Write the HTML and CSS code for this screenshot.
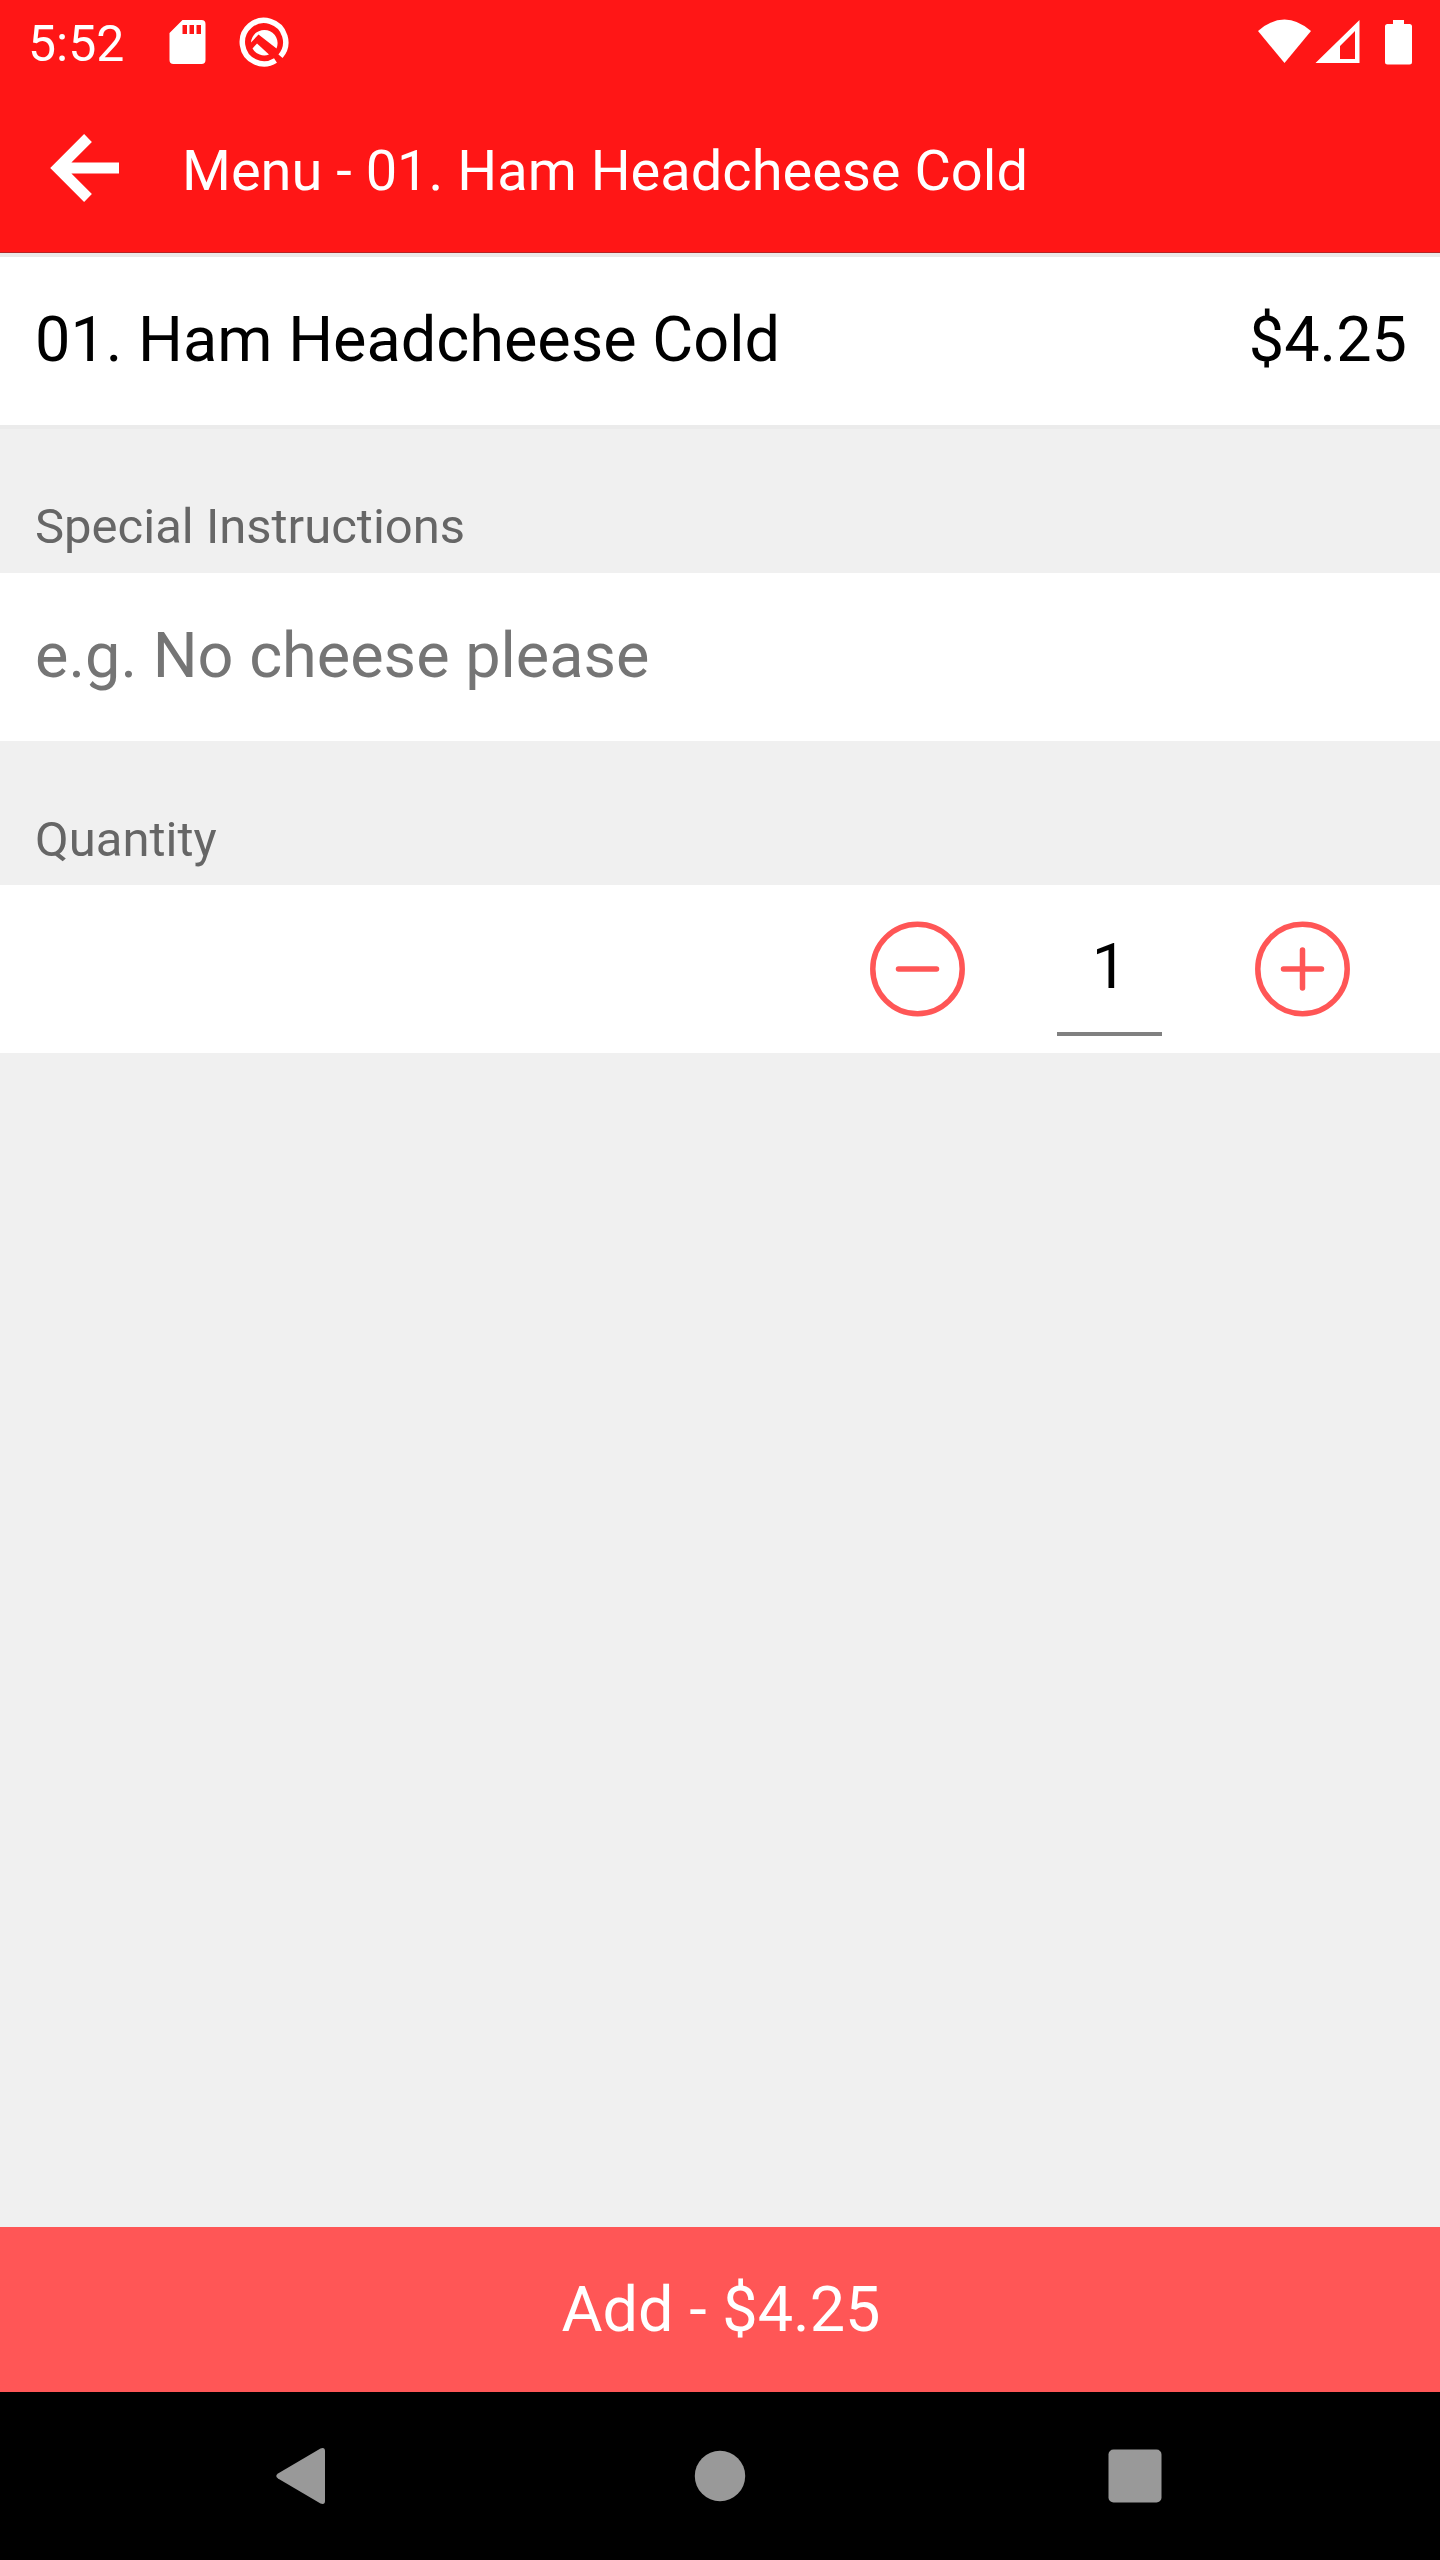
FILE: index.html
```html
<!DOCTYPE html>
<html lang="en">
<head>
  <meta charset="UTF-8" />
  <title>Menu - 01. Ham Headcheese Cold</title>
  <link rel="stylesheet" href="styles.css">
</head>

<body>
  <!-- Status Bar -->
  <div class="status-bar">
    <span class="clock">5:52</span>
    <svg class="status-left" width="120" height="50" viewBox="169 17 120 50">
      <path fill="#fff" fill-rule="evenodd" d="M182.500 20H201.500Q205.500 20 205.500 24V60Q205.500 64 201.500 64H173.500Q169.500 64 169.500 60V33ZM182.500 25V34H187V25ZM189.500 25V34H194V25ZM196.500 25V34H201V25Z"/>
      <path fill="none" stroke="#fff" stroke-width="5.500" d="M275.500 60.500A21.700 21.700 0 1 1 280.500 56.200"/>
      <path fill="#fff" d="M251 42.500A13.300 13.300 0 1 1 276.500 48.500L258.500 34.500Z"/>
      <path fill="#fff" d="M257 43.500L269 54.500A13.500 13.500 0 0 1 252.500 48.500Z"/>
    </svg>
    <svg class="status-right" width="156" height="50" viewBox="1257 17 156 50">
      <path fill="#fff" d="M1258 31Q1284.500 8 1311 31L1284.500 63Z"/>
      <path fill="#fff" fill-rule="evenodd" d="M1359.500 20V63H1315.500ZM1355 31L1340 46V59H1355Z"/>
      <path fill="#fff" d="M1393 20H1404V24H1409.500Q1412 24 1412 26.500V62Q1412 64.500 1409.500 64.500H1387.500Q1385 64.500 1385 62V26.500Q1385 24 1387.500 24H1393Z"/>
    </svg>
  </div>

  <!-- Title Bar -->
  <header class="title-bar">
    <svg class="back" width="70" height="68" viewBox="0 0 70 68">
      <path fill="none" stroke="#fff" stroke-width="11" d="M38 4L8 34L38 64M8 34H69"/>
    </svg>
    <h1>Menu - 01. Ham Headcheese Cold</h1>
  </header>

  <main>
    <section class="row item">
      <span>01. Ham Headcheese Cold</span>
      <span>$4.25</span>
    </section>

    <h2>Special Instructions</h2>
    <section class="row">
      <input class="instructions" type="text" placeholder="e.g. No cheese please">
    </section>

    <h2 class="quantity-title">Quantity</h2>
    <section class="row quantity">
      <svg width="96" height="96" viewBox="0 0 96 96">
        <circle cx="47.500" cy="48" r="44.700"/>
        <path d="M28.500 48H66.500"/>
      </svg>
      <div class="count">1</div>
      <svg width="96" height="96" viewBox="0 0 96 96">
        <circle cx="47.500" cy="48" r="44.700"/>
        <path d="M28.500 48H66.500M47.500 29V67"/>
      </svg>
    </section>
  </main>

  <button class="add">Add - $4.25</button>

  <!-- Navigation -->
  <nav>
    <svg width="60" height="60" viewBox="0 0 60 60">
      <path d="M7 27.500L49.500 2.500Q54 1 54 5V55Q54 59 49.500 57.500L7 32.500Q3.500 30 7 27.500Z"/>
    </svg>
    <svg width="60" height="60" viewBox="0 0 60 60">
      <circle cx="32" cy="30" r="25.200"/>
    </svg>
    <svg width="60" height="60" viewBox="0 0 60 60">
      <rect x="3.500" y="3.500" width="53" height="53" rx="5"/>
    </svg>
  </nav>
</body>
</html>
```
FILE: styles.css
```css
* {
  box-sizing: border-box;
}

body {
  font-family: Roboto, "Liberation Sans", sans-serif;
  background: #f0f0f0;
  color: #000;
  margin: 0;
  height: 2560px;
  display: flex;
  flex-direction: column;
}

svg {
  display: block;
  flex: none;
}

.status-bar {
  background-color: #ff1616;
  color: #fff;
  height: 84px;
  padding: 0 27px 0 28px;
  display: flex;
  align-items: center;
}

.clock {
  width: 141px;
  font-size: 50px;
  line-height: 60px;
  padding-top: 3px;
}

.status-right {
  margin-left: auto;
}

.title-bar {
  background-color: #ff1616;
  color: #fff;
  height: 169px;
  padding-left: 50px;
  border-bottom: 1px solid #b52525;
  display: flex;
  align-items: center;
}

.title-bar h1 {
  font-size: 56px;
  font-weight: 400;
  line-height: 70px;
  margin: 6px 0 0 62px;
}

main {
  flex: 1;
}

.row {
  background-color: #fff;
  height: 168px;
  padding: 0 35px;
  display: flex;
  align-items: center;
  font-size: 63px;
}

.item {
  height: 176px;
  padding: 0 33px 4px 35px;
  border-top: 4px solid #ebe8e8;
  border-bottom: 4px solid #ebebeb;
  justify-content: space-between;
}

h2 {
  color: #666;
  font-size: 49px;
  font-weight: 400;
  line-height: 60px;
  height: 144px;
  margin: 0;
  padding: 68px 0 0 35px;
}

.quantity-title {
  padding-top: 69px;
}

.instructions {
  font: inherit;
  width: 100%;
  padding: 0 0 4px;
  border: none;
  outline: none;
}

.instructions::placeholder {
  color: #757575;
}

.quantity {
  justify-content: flex-end;
  padding-right: 89px;
}

.quantity svg {
  fill: none;
  stroke: #ff5656;
  stroke-width: 5.5;
  stroke-linecap: round;
}

.count {
  width: 105px;
  height: 134px;
  margin: 0 93px 0 91px;
  padding-top: 27px;
  border-bottom: 4px solid #808080;
  line-height: 76px;
  text-align: center;
}

.add {
  height: 165px;
  border: none;
  padding: 0 0 0 2px;
  background-color: #ff5656;
  color: #fff;
  font-family: inherit;
  font-size: 63px;
}

nav {
  background-color: #000;
  height: 168px;
  display: flex;
  justify-content: space-between;
  padding: 54px 275px 0 271px;
}

nav svg {
  fill: #999;
}
```
